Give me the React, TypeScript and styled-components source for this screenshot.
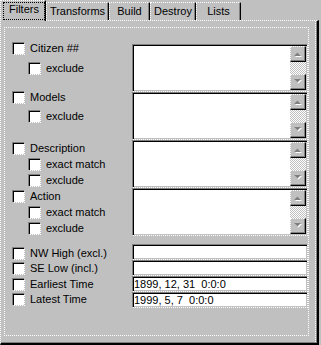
import React from 'react';
import styled, { createGlobalStyle } from 'styled-components';

const Global = createGlobalStyle`
  html, body { margin: 0; padding: 0; background: #c0c0c0; }
  body { font-family: "Liberation Sans", Arial, sans-serif; font-size: 11px; color: #000; }
  * { box-sizing: border-box; }
`;

const Window = styled.div`
  width: 321px;
  height: 345px;
  background: #c0c0c0;
  display: flex;
  flex-direction: column;
  overflow: hidden;
`;

const TabStrip = styled.div`
  display: flex;
  align-items: flex-end;
  height: 20px;
  position: relative;
  z-index: 1;
`;

const Tab = styled.div<{ $w: number; $active?: boolean }>`
  width: ${p => p.$w}px;
  height: ${p => (p.$active ? 21 : 18)}px;
  margin-bottom: ${p => (p.$active ? -1 : 0)}px;
  background: #c0c0c0;
  background-clip: padding-box;
  border-left: 1px dotted #fff;
  border-top: 1px dotted #fff;
  border-right: 1px solid #000;
  box-shadow: inset -1px 0 #808080;
  padding: ${p => (p.$active ? '1px 0 1px 2px' : '2px 0 0 0')};
  display: flex;
`;

const TabLabel = styled.span<{ $focus?: boolean }>`
  flex: 1;
  display: flex;
  justify-content: center;
  align-items: flex-start;
  line-height: 13px;
  white-space: nowrap;
  border: ${p => (p.$focus ? '1px dotted #000' : 'none')};
  padding-top: 0;
`;

const Panel = styled.div`
  width: 319px;
  height: 325px;
  background: #c0c0c0;
  background-clip: padding-box;
  border-top: 1px dotted #fff;
  border-left: 1px dotted #fff;
  border-right: 2px solid #000;
  border-bottom: 2px solid #000;
  box-shadow: inset -1px -1px #808080;
  padding: 0 1px 1px 0;
  display: flex;
`;

const Page = styled.div`
  flex: 1;
  border-right: 1px dotted #fff;
  padding: 6px 0 0 3px;
`;

const Group = styled.div`
  width: 305px;
  height: 309px;
  border: 1px dotted #fff;
  padding-left: 7px;
  display: flex;
`;

const LeftCol = styled.div`
  width: 120px;
  display: flex;
  flex-direction: column;
`;

const RightCol = styled.div`
  width: 176px;
  display: flex;
  flex-direction: column;
`;

const Row = styled.label<{ $indent?: boolean; $top: number }>`
  display: flex;
  align-items: center;
  gap: 5px;
  height: 13px;
  margin-top: ${p => p.$top}px;
  margin-left: ${p => (p.$indent ? 16 : 0)}px;
  line-height: 13px;
  white-space: nowrap;
`;

const Check = styled.span`
  width: 13px;
  height: 13px;
  flex: none;
  background: #fff;
  background-clip: padding-box;
  border-style: solid dotted dotted solid;
  border-width: 1px;
  border-color: #808080 #fff #fff #808080;
  box-shadow: inset 1px 1px #000;
`;

const ListBox = styled.div<{ $top?: number }>`
  height: 48px;
  margin-top: ${p => p.$top ?? 0}px;
  background: #fff;
  background-clip: padding-box;
  border-style: solid dotted dotted solid;
  border-width: 1px;
  border-color: #808080 #fff #fff #808080;
  box-shadow: inset 1px 1px #000, inset -1px -1px #c0c0c0;
  padding: 1px;
  display: flex;
  justify-content: flex-end;
`;

const ScrollBar = styled.div`
  width: 16px;
  display: flex;
  flex-direction: column;
`;

const ScrollBtn = styled.div`
  width: 16px;
  height: 16px;
  background: #c0c0c0;
  border-style: dotted solid solid dotted;
  border-width: 1px;
  border-color: #fff #000 #000 #fff;
  box-shadow: inset -1px -1px #808080;
  display: flex;
  align-items: center;
  justify-content: center;
`;

const Track = styled.div`
  flex: 1;
  background: repeating-conic-gradient(#fff 0 25%, #c0c0c0 0 50%) 0 0 / 2px 2px;
`;

const Field = styled.div<{ $top?: number }>`
  height: 16px;
  margin-top: ${p => p.$top ?? 0}px;
  background: #fff;
  background-clip: padding-box;
  border-style: solid dotted dotted solid;
  border-width: 1px;
  border-color: #808080 #fff #fff #808080;
  box-shadow: inset 1px 1px #000, inset -1px -1px #c0c0c0;
  padding: 1px 0 0 1px;
  line-height: 13px;
  white-space: pre;
  overflow: hidden;
`;

const Arrow = ({ down }: { down?: boolean }) => (
  <svg width="8" height="6" viewBox="0 0 8 6" style={{ display: 'block', marginTop: down ? 0 : 1 }}>
    {down ? (
      <>
        <polygon points="1,1 8,1 4.5,4.5" fill="#fff" />
        <polygon points="0,0 7,0 3.5,3.5" fill="#808080" />
      </>
    ) : (
      <>
        <polygon points="1,5 8,5 4.5,1.5" fill="#fff" />
        <polygon points="0,4 7,4 3.5,0.5" fill="#808080" />
      </>
    )}
  </svg>
);

const List = ({ top }: { top?: number }) => (
  <ListBox $top={top}>
    <ScrollBar>
      <ScrollBtn><Arrow /></ScrollBtn>
      <Track />
      <ScrollBtn><Arrow down /></ScrollBtn>
    </ScrollBar>
  </ListBox>
);

const tabs = [
  { label: 'Filters', w: 46 },
  { label: 'Transforms', w: 63 },
  { label: 'Build', w: 41 },
  { label: 'Destroy', w: 46 },
  { label: 'Lists', w: 45 },
];

const rows: { label: string; top: number; indent?: boolean }[] = [
  { label: 'Citizen ##', top: 14 },
  { label: 'exclude', top: 7, indent: true },
  { label: 'Models', top: 16 },
  { label: 'exclude', top: 6, indent: true },
  { label: 'Description', top: 19 },
  { label: 'exact match', top: 3, indent: true },
  { label: 'exclude', top: 3, indent: true },
  { label: 'Action', top: 3 },
  { label: 'exact match', top: 3, indent: true },
  { label: 'exclude', top: 3, indent: true },
  { label: 'NW High (excl.)', top: 12 },
  { label: 'SE Low (incl.)', top: 2 },
  { label: 'Earliest Time', top: 3 },
  { label: 'Latest Time', top: 2 },
];

export default function App() {
  return (
    <Window>
      <Global />
      <TabStrip>
        {tabs.map((t, i) => (
          <Tab key={t.label} $w={t.w} $active={i === 0}>
            <TabLabel $focus={i === 0}>{t.label}</TabLabel>
          </Tab>
        ))}
      </TabStrip>
      <Panel>
        <Page>
          <Group>
            <LeftCol>
              {rows.map((r, i) => (
                <Row key={i} $top={r.top} $indent={r.indent}>
                  <Check />
                  {r.label}
                </Row>
              ))}
            </LeftCol>
            <RightCol>
              <List top={16} />
              <List />
              <List />
              <List />
              <Field $top={8} />
              <Field />
              <Field>{'1899, 12, 31  0:0:0'}</Field>
              <Field>{'1999, 5, 7  0:0:0'}</Field>
            </RightCol>
          </Group>
        </Page>
      </Panel>
    </Window>
  );
}
